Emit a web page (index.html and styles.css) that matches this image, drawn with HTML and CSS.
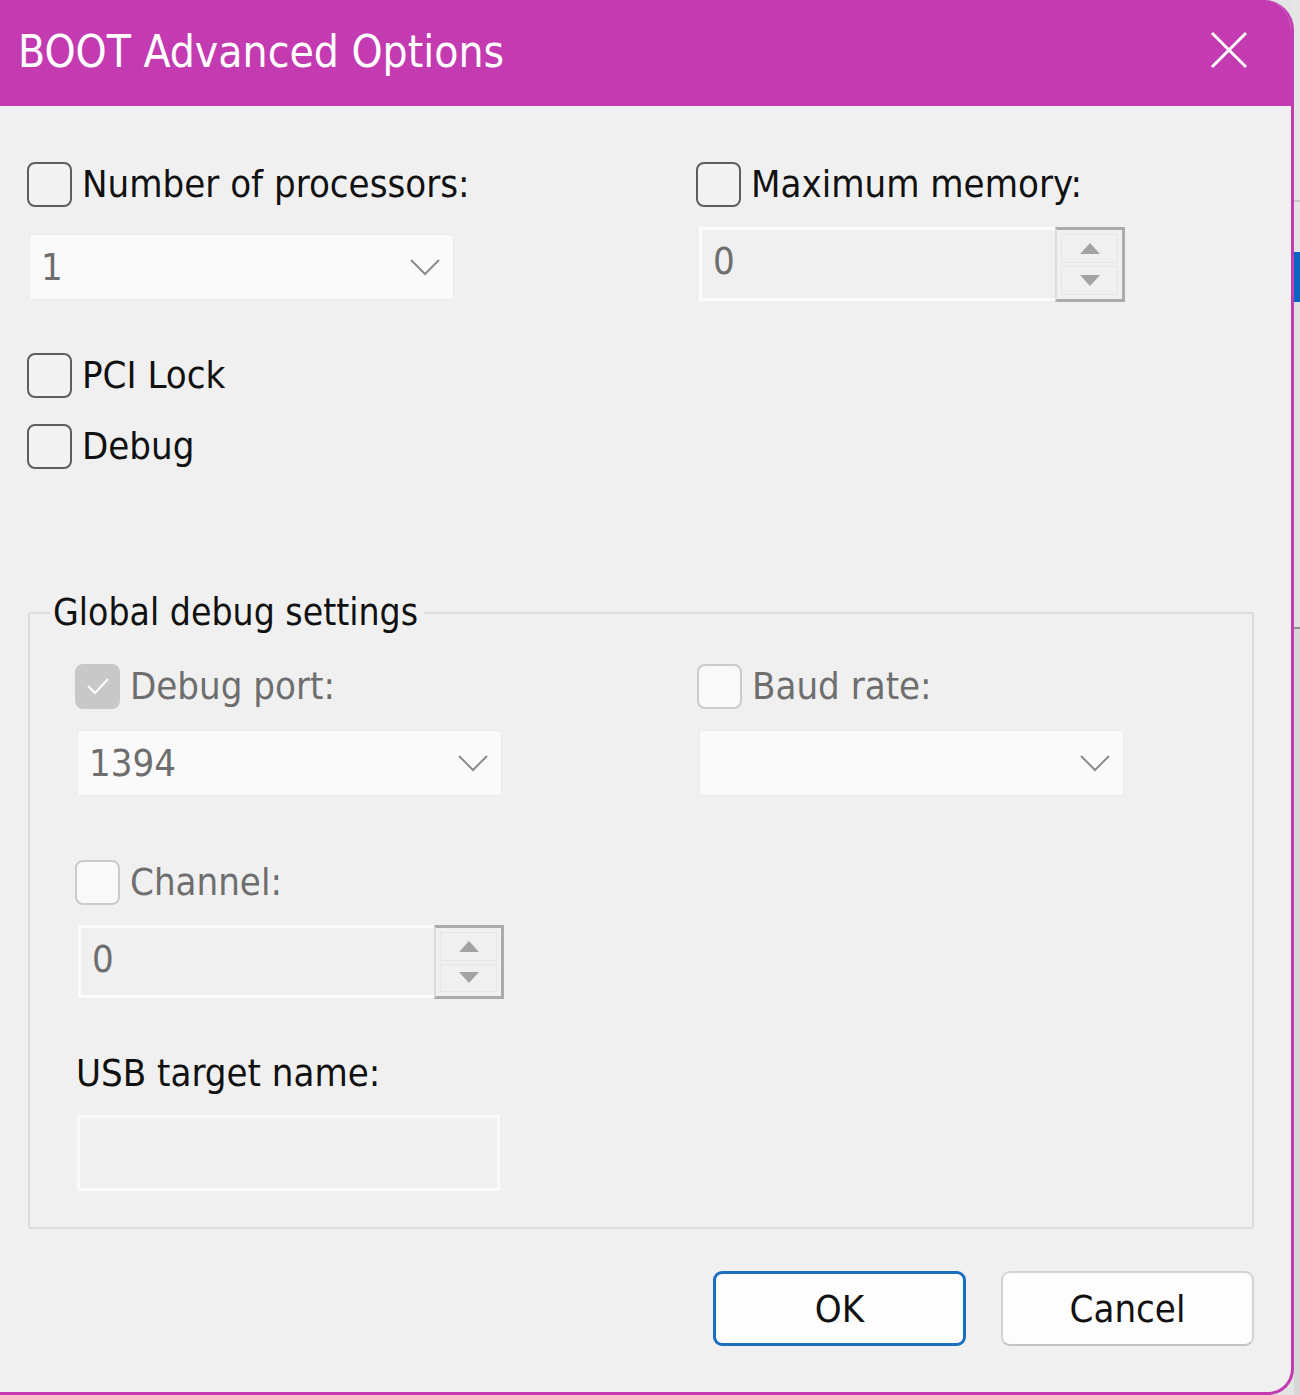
FILE: index.html
```html
<!DOCTYPE html>
<html lang="en">
<head>
    <meta charset="UTF-8">
    <title>BOOT Advanced Options</title>
    <link rel="stylesheet" href="styles.css">
</head>
<body>
    <div class="dialog">
        <div class="titlebar">
            <span class="title">BOOT Advanced Options</span>
            <button class="close" aria-label="Close">
                <svg width="38" height="38" viewBox="0 0 38 38"><path d="M2 2 L36 36 M36 2 L2 36" stroke="#fff" stroke-width="3" fill="none"/></svg>
            </button>
        </div>

        <div class="content">
            <div class="pair">
                <div class="col">
                    <label class="check"><span class="box"></span>Number of processors:</label>
                    <div class="combo disabled">
                        <span>1</span>
                        <svg class="chevron" width="32" height="18" viewBox="0 0 32 18"><path d="M2 2 L16 16 L30 2" stroke="#8c8c8c" stroke-width="2" fill="none"/></svg>
                    </div>
                </div>
                <div class="col">
                    <label class="check"><span class="box"></span>Maximum memory:</label>
                    <div class="spin spin-mem">
                        <span class="spin-text">0</span>
                        <div class="spin-btns">
                            <span class="arrow up"></span>
                            <span class="arrow down"></span>
                        </div>
                    </div>
                </div>
            </div>

            <label class="check pci"><span class="box"></span>PCI Lock</label>
            <label class="check debug"><span class="box"></span>Debug</label>

            <fieldset class="group">
                <legend>Global debug settings</legend>
                <div class="pair">
                    <div class="col">
                        <label class="check off"><span class="box checked">
                            <svg width="26" height="20" viewBox="0 0 26 20"><path d="M3 10 L10 17 L23 3" stroke="#fff" stroke-width="2" fill="none"/></svg>
                        </span>Debug port:</label>
                        <div class="combo disabled">
                            <span>1394</span>
                            <svg class="chevron" width="32" height="18" viewBox="0 0 32 18"><path d="M2 2 L16 16 L30 2" stroke="#8c8c8c" stroke-width="2" fill="none"/></svg>
                        </div>
                    </div>
                    <div class="col">
                        <label class="check off"><span class="box"></span>Baud rate:</label>
                        <div class="combo disabled">
                            <span></span>
                            <svg class="chevron" width="32" height="18" viewBox="0 0 32 18"><path d="M2 2 L16 16 L30 2" stroke="#8c8c8c" stroke-width="2" fill="none"/></svg>
                        </div>
                    </div>
                </div>

                <label class="check off channel"><span class="box"></span>Channel:</label>
                <div class="spin spin-chan">
                    <span class="spin-text">0</span>
                    <div class="spin-btns">
                        <span class="arrow up"></span>
                        <span class="arrow down"></span>
                    </div>
                </div>

                <div class="usb-label">USB target name:</div>
                <div class="textbox"></div>
            </fieldset>

            <div class="buttons">
                <button class="btn primary">OK</button>
                <button class="btn">Cancel</button>
            </div>
        </div>
    </div>

    <div class="desktop">
        <div class="strip-top"></div>
        <div class="strip-blue"></div>
        <div class="strip-mid"></div>
        <div class="strip-low"></div>
    </div>
</body>
</html>
```

FILE: styles.css
```css
body {
    margin: 0;
    width: 1300px;
    height: 1395px;
    display: flex;
    overflow: hidden;
    background: #e4e4e4;
    font-family: 'DejaVu Sans Condensed', 'DejaVu Sans', Roboto, sans-serif;
    font-stretch: condensed;
    color: #111;
}
.dialog {
    width: 1291px;
    height: 1392px;
    flex: none;
    background: #f0f0f0;
    border-right: 3px solid #c33ab1;
    border-bottom: 3px solid #c33ab1;
    border-top-right-radius: 30px;
    border-bottom-right-radius: 26px;
    overflow: hidden;
    display: flex;
    flex-direction: column;
}
.titlebar {
    height: 106px;
    background: #c33ab1;
    display: flex;
    align-items: center;
    justify-content: space-between;
    padding: 0 46px 0 18px;
    flex: none;
    margin-right: -3px;
}
.title {
    color: #fff;
    font-size: 44px;
    margin-top: -4px;
}
.close {
    background: none;
    border: none;
    padding: 0;
    width: 38px;
    height: 38px;
    margin-top: -6px;
}
.content {
    padding: 55px 37px 0 27px;
    display: flex;
    flex-direction: column;
}
.pair {
    display: flex;
}
.col {
    width: 669px;
    flex: none;
    display: flex;
    flex-direction: column;
}
.check {
    display: flex;
    align-items: center;
    height: 46px;
    font-size: 38px;
    color: #111;
}
.box {
    width: 41px;
    height: 41px;
    border: 2.5px solid #5e5e5e;
    border-radius: 8px;
    background: #f3f3f3;
    margin-right: 10px;
    flex: none;
    display: flex;
    align-items: center;
    justify-content: center;
}
.off {
    color: #6e6e6e;
}
.off .box {
    border-color: #cbcbcb;
    background: #f9f9f9;
}
.off .box.checked {
    border-color: #c8c8c8;
    background: #c8c8c8;
}
.combo {
    width: 425px;
    height: 66px;
    box-sizing: border-box;
    margin-top: 27px;
    margin-left: 2px;
    background: #fafafa;
    border: 1px solid #ebebeb;
    border-radius: 3px;
    display: flex;
    align-items: center;
    justify-content: space-between;
    padding: 0 12px 0 11px;
    font-size: 38px;
    color: #6e6e6e;
}
.spin {
    display: flex;
    height: 74px;
    width: 426px;
    margin-left: 3px;
}
.spin-mem {
    margin-top: 20px;
    height: 75px;
}
.spin-text {
    flex: 1;
    background: #f0f0f0;
    border: 3px solid #fbfbfb;
    border-right: none;
    padding: 0 0 6px 11px;
    display: flex;
    align-items: center;
    font-size: 38px;
    color: #6e6e6e;
    margin-bottom: 1px;
}
.spin-btns {
    width: 57px;
    border: 3px solid #ababab;
    border-left: 2px solid #dcdcdc;
    display: flex;
    flex-direction: column;
    padding: 4px;
    gap: 3px;
}
.arrow {
    flex: 1;
    background: #f0f0f0;
    border: 1px solid #e6e6e6;
    display: flex;
    align-items: center;
    justify-content: center;
}
.arrow::after {
    content: "";
    border-left: 10px solid transparent;
    border-right: 10px solid transparent;
}
.up::after {
    border-bottom: 11px solid #a3a3a3;
}
.down::after {
    border-top: 11px solid #a3a3a3;
}
.pci {
    margin-top: 50px;
}
.debug {
    margin-top: 25px;
}
.group {
    margin: 122px 0 0 1px;
    padding: 0 0 0 45px;
    height: 638px;
    width: 1226px;
    min-width: 0;
    box-sizing: border-box;
    border: 2px solid #dcdcdc;
    border-radius: 2px;
}
.group legend {
    font-size: 37px;
    padding: 0 6px 0 3px;
    margin-left: -25px;
    color: #111;
}
.group .pair {
    margin-top: 29px;
}
.group .col {
    width: 622px;
}
.group .col + .col {
    width: 440px;
}
.group .combo {
    margin-top: 21px;
}
.channel {
    margin-top: 63px;
}
.spin-chan {
    margin-top: 20px;
}
.usb-label {
    font-size: 38px;
    margin-top: 52px;
    margin-left: 1px;
}
.textbox {
    width: 423px;
    height: 76px;
    box-sizing: border-box;
    margin-top: 20px;
    margin-left: 2px;
    border: 3px solid #fafafa;
    border-radius: 2px;
    background: #f0f0f0;
}
.buttons {
    display: flex;
    justify-content: flex-end;
    gap: 35px;
    margin-top: 42px;
}
.btn {
    width: 253px;
    height: 75px;
    background: #fdfdfd;
    border: 2px solid #d3d3d3;
    border-bottom-color: #c2c2c2;
    border-radius: 9px;
    font-family: inherit;
    font-stretch: condensed;
    font-size: 38px;
    color: #111;
}
.btn.primary {
    border: 3px solid #1c6fc0;
}
.desktop {
    flex: 1;
    display: flex;
    flex-direction: column;
}
.strip-top {
    height: 200px;
    background: #e6e6e6;
    border-bottom: 2px solid #c8c8c8;
}
.strip-blue {
    margin-top: 50px;
    height: 50px;
    background: #0a64c2;
}
.strip-mid {
    height: 325px;
    background: #e0e0e0;
    border-bottom: 2px solid #8e8e8e;
}
.strip-low {
    flex: 1;
    background: #d7d7d7;
}
```
